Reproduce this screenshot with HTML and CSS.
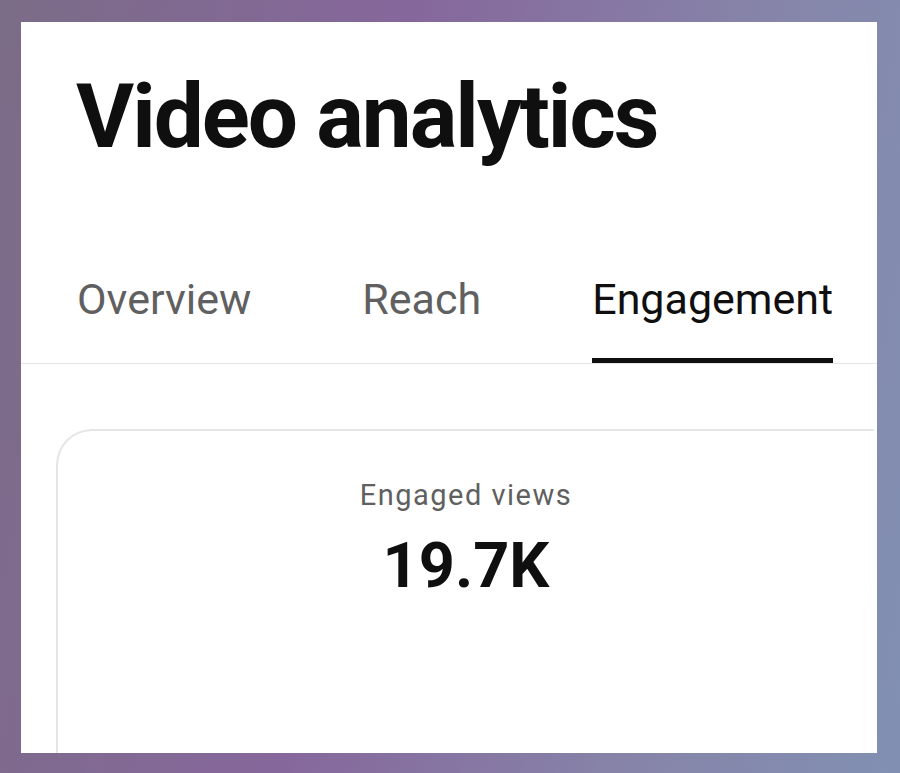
FILE: index.html
```html
<!DOCTYPE html>
<html lang="en">
<head>
  <meta charset="UTF-8">
  <meta name="viewport" content="width=device-width, initial-scale=1.0">
  <title>Video analytics</title>
  <link rel="stylesheet" href="styles.css">
</head>
<body>

<div class="panel">
  <h1 class="title">Video analytics</h1>

  <div class="tabs">
    <div class="tab">Overview</div>
    <div class="tab">Reach</div>
    <div class="tab active">Engagement</div>
  </div>

  <div class="card">
    <div class="card-label">Engaged views</div>
    <div class="card-value">19.7K</div>
  </div>
</div>

</body>
</html>
```

FILE: styles.css
```css
html, body {
  height: 100%;
}
body {
  margin: 0;
  padding: 22px 23px 20px 21px;
  box-sizing: border-box;
  font-family: Roboto, "Liberation Sans", Arial, sans-serif;
  background-color: #80709a;
  background-image: linear-gradient(100deg, #7b6c87 0%, #86679c 40%, #8685a9 75%, #8190b2 100%);
}
.panel {
  height: 731px;
  background-color: #fff;
  overflow: hidden;
  padding: 0 0 0 35px;
  box-sizing: border-box;
}
.title {
  margin: 50px 0 0 20px;
  font-size: 89px;
  line-height: 1;
  font-weight: 700;
  color: #0f0f0f;
  letter-spacing: -2px;
}
.tabs {
  display: flex;
  gap: 111px;
  margin: 117px 0 0 -35px;
  padding-left: 56px;
  border-bottom: 1px solid #e5e5e5;
}
.tab {
  font-size: 43px;
  line-height: 1;
  color: #606060;
  padding-bottom: 37px;
  border-bottom: 5px solid transparent;
}
.tab.active {
  color: #0f0f0f;
  border-bottom-color: #0f0f0f;
}
.card {
  width: 818px;
  height: 400px;
  margin-top: 65px;
  border: 2px solid #e5e5e5;
  border-right: none;
  border-radius: 36px 0 0 0;
  padding-top: 50px;
  text-align: center;
  box-sizing: border-box;
}
.card-label {
  font-size: 29px;
  line-height: 1;
  letter-spacing: 1.5px;
  color: #606060;
}
.card-value {
  margin-top: 24px;
  font-size: 63px;
  line-height: 1;
  font-weight: 700;
  color: #0f0f0f;
}
```
